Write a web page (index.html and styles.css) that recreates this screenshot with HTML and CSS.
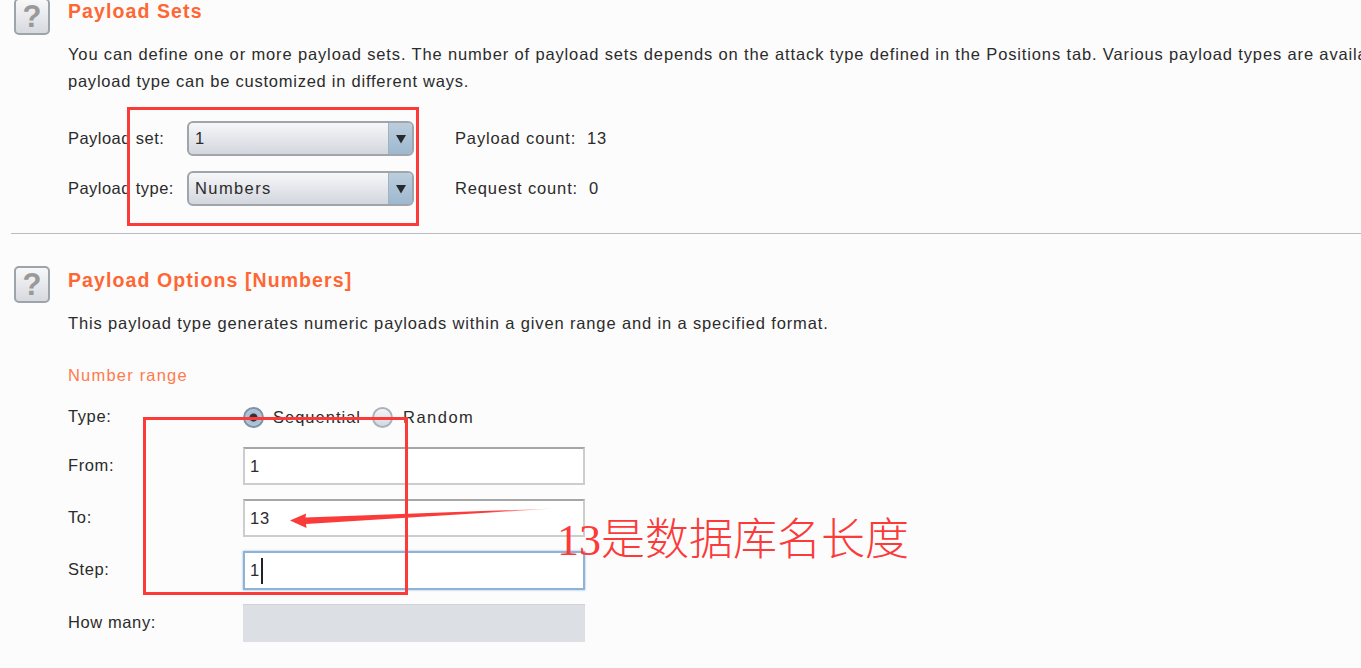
FILE: index.html
```html
<!DOCTYPE html>
<html lang="en">
<head>
<meta charset="utf-8">
<title>Payload Sets</title>
<link rel="stylesheet" href="styles.css">
</head>
<body>
<main class="page">
  <section class="section section-sets">
    <div class="help">?</div>
    <div class="content">
      <h2 class="title">Payload Sets</h2>
      <p class="desc">You can define one or more payload sets. The number of payload sets depends on the attack type defined in the Positions tab. Various payload types are available for each payload set, and each<br><span class="desc-tight">payload type can be customized in different ways.</span></p>
      <div class="set-grid">
        <span class="label">Payload set:</span>
        <div class="combo"><span class="combo-value">1</span><span class="combo-btn"><svg width="10" height="10" viewBox="0 0 10 10"><path d="M0 1h10L5 9.500z" fill="#26292e"/></svg></span></div>
        <span class="stat">Payload count:&nbsp; 13</span>
        <span class="label">Payload type:</span>
        <div class="combo"><span class="combo-value">Numbers</span><span class="combo-btn"><svg width="10" height="10" viewBox="0 0 10 10"><path d="M0 1h10L5 9.500z" fill="#26292e"/></svg></span></div>
        <span class="stat">Request count:&nbsp; 0</span>
      </div>
    </div>
  </section>
  <hr class="divider">
  <section class="section section-options">
    <div class="help">?</div>
    <div class="content">
      <h2 class="title">Payload Options [Numbers]</h2>
      <p class="desc">This payload type generates numeric payloads within a given range and in a specified format.</p>
      <h3 class="subtitle">Number range</h3>
      <div class="form-grid">
        <span class="label">Type:</span>
        <div class="radios">
          <span class="radio radio-on"></span><span class="radio-text">Sequential</span>
          <span class="radio"></span><span class="radio-text radio-text-wide">Random</span>
        </div>
        <span class="label">From:</span>
        <div class="field">1</div>
        <span class="label">To:</span>
        <div class="field">13</div>
        <span class="label">Step:</span>
        <div class="field field-focus">1<span class="caret"></span></div>
        <span class="label">How many:</span>
        <div class="field field-off"></div>
      </div>
    </div>
  </section>
</main>
<div class="mark mark-one"></div>
<div class="mark mark-two"></div>
<svg class="arrow" width="270" height="30" viewBox="0 0 270 30"><defs><linearGradient id="fade" x1="0" x2="1" y1="0" y2="0"><stop offset="0" stop-color="#fb3a3a"/><stop offset="0.75" stop-color="#fb3a3a"/><stop offset="1" stop-color="#fb3a3a" stop-opacity="0.1"/></linearGradient></defs><path d="M0 12.500L16 5.500L15.500 9.500L265 0.500L16 16L16.500 20z" fill="url(#fade)"/></svg>
<div class="note">13是数据库名长度</div>
</body>
</html>
```
FILE: styles.css
```css
* { box-sizing: border-box; }
html, body { margin: 0; height: 100%; overflow: hidden; }
body {
  background: #fcfcfc;
  color: #2b2b2b;
  font-family: "Liberation Sans", Arial, sans-serif;
  font-size: 16.500px;
  letter-spacing: 0.860px;
  position: relative;
}
.page { display: flex; flex-direction: column; padding-left: 11px; }
.section { display: flex; }
.section-sets { margin-top: -2px; }
.section-options { margin-top: 33px; }
.help {
  flex: none;
  width: 36px;
  height: 37px;
  margin: 0 18px 0 3px;
  border: 2px solid #9ea4ab;
  border-radius: 5px;
  background: linear-gradient(#f8f8f9, #d6d9de);
  color: #999;
  font-size: 31px;
  font-weight: 700;
  line-height: 33px;
  text-align: center;
  letter-spacing: 0;
}
.section-options .help { margin-top: -1px; }
.content { flex: none; width: 1400px; }
.title {
  margin: 0;
  height: 26px;
  color: #ff6633;
  font-size: 19.500px;
  line-height: 26px;
  font-weight: 700;
  letter-spacing: 1.100px;
}
.desc { margin: 17px 0 0; line-height: 27px; white-space: nowrap; }
.desc-tight { letter-spacing: 0.760px; }
.set-grid {
  display: grid;
  grid-template-columns: 119px 227px auto;
  grid-auto-rows: 35px;
  row-gap: 15px;
  margin-top: 26px;
  align-items: center;
}
.set-grid .label { letter-spacing: 0.450px; padding-bottom: 1px; }
.combo {
  display: flex;
  height: 35px;
  border: 2px solid #a0a5ac;
  border-radius: 6px;
  background: linear-gradient(#f7f7f9, #d3d6de);
  overflow: hidden;
}
.combo-value { flex: 1; padding-left: 6px; line-height: 30px; letter-spacing: 1.400px; }
.combo-btn {
  flex: none;
  width: 24px;
  display: flex;
  align-items: center;
  justify-content: center;
  background: linear-gradient(#bccedd, #9db8cf);
  border-left: 1px solid #9fb2c4;
}
.stat { padding-left: 41px; padding-bottom: 1px; }
.divider { margin: 27px 0 0; height: 1px; border: 0; background: #b9bdc2; width: 1400px; }
.subtitle {
  margin: 25px 0 0;
  color: #ff7a4d;
  font-size: 16.500px;
  line-height: 27px;
  font-weight: 400;
  letter-spacing: 1.200px;
}
.form-grid {
  display: grid;
  grid-template-columns: 175px 342px;
  grid-template-rows: 32px 38px 38px 39px 38px;
  row-gap: 14px;
  margin-top: 12px;
  align-items: center;
}
.form-grid .label { padding-bottom: 2px; letter-spacing: 0.600px; }
.radios { display: flex; align-items: center; }
.radio {
  width: 21px;
  height: 21px;
  border-radius: 50%;
  border: 2px solid #a9b3bd;
  background: linear-gradient(#f4f5f7, #d5d8de);
  flex: none;
}
.radio-on { background: radial-gradient(circle, #333 0 3.500px, #a5bcd2 4.500px, #c5d3df); border-color: #7f93a8; }
.radio-text { margin: 0 11px 0 9px; letter-spacing: 1px; }
.radio-text-wide { margin-left: 10px; letter-spacing: 1.500px; }
.field {
  height: 100%;
  border: 2px solid #cdcdcd;
  border-top-color: #a6a6a6;
  background: #fff;
  padding-left: 5px;
  display: flex;
  align-items: center;
}
.field-focus { border: 2px solid #8fb3d6; box-shadow: 0 0 2px #8fb3d6; }
.field-off { background: #dcdfe4; border: 0; box-shadow: inset 0 1px 1px #d0d2d6; }
.caret { width: 1.500px; height: 26px; background: #222; margin-left: 1px; }
.mark { position: absolute; border: 3px solid #fb3a3a; }
.mark-one { left: 127px; top: 107px; width: 292px; height: 119px; }
.mark-two { left: 143px; top: 417px; width: 265px; height: 178px; }
.arrow { position: absolute; left: 290px; top: 508px; }
.note {
  position: absolute;
  left: 557px;
  top: 511px;
  color: #fb3a3a;
  font-family: "Liberation Serif", "Noto Sans CJK SC", serif;
  font-size: 44px;
  line-height: 60px;
  letter-spacing: 0;
  font-weight: 300;
  white-space: nowrap;
}
```
